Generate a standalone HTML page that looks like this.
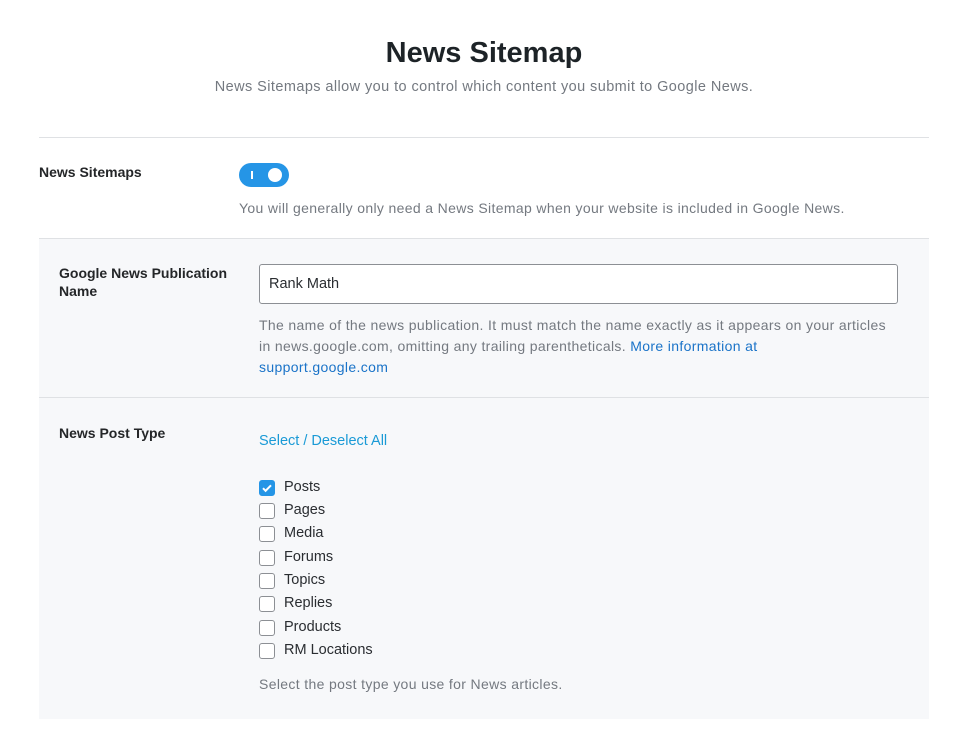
<!DOCTYPE html>
<html><head><meta charset="utf-8"><style>
body{margin:0;background:#fff;font-family:"Liberation Sans",Arial,sans-serif;color:#242628;width:965px;height:737px;position:relative;overflow:hidden}
.a{position:absolute}
h1{position:absolute;top:37px;left:0;width:968px;text-align:center;margin:0;font-size:29px;font-weight:bold;color:#1d2327}
.sub{top:79px;left:0;width:968px;text-align:center;font-size:14.5px;color:#747980;letter-spacing:0.42px}
.line{left:39px;width:890px;height:1px;background:#dfe1e4}
.lbl{font-size:14px;font-weight:bold;color:#242628;line-height:18px}
.desc{font-size:14px;color:#747980;line-height:21px;letter-spacing:0.35px;white-space:nowrap}
a{color:#1a73c8;text-decoration:none}
.cb{position:absolute;left:259px;width:14px;height:14px;border:1px solid #8c8f94;border-radius:3px;background:#fff}
.cbl{position:absolute;left:284px;font-size:14.5px;color:#2a2d31}
</style></head><body>
<h1>News Sitemap</h1>
<div class="a sub">News Sitemaps allow you to control which content you submit to Google News.</div>
<div class="a line" style="top:137px"></div>
<div class="a lbl" style="left:39px;top:163px">News Sitemaps</div>
<div class="a" style="left:239px;top:163px;width:50px;height:24px;border-radius:12px;background:#2595e6">
<div class="a" style="left:12px;top:8px;width:2px;height:8px;background:#fff"></div>
<div class="a" style="left:29px;top:5px;width:14px;height:14px;border-radius:50%;background:#fff"></div></div>
<div class="a desc" style="left:239px;top:198px">You will generally only need a News Sitemap when your website is included in Google News.</div>
<div class="a" style="left:39px;top:238px;width:890px;height:480px;background:#f7f8fa;border-top:1px solid #dfe1e4"></div>
<div class="a lbl" style="left:59px;top:264px">Google News Publication<br>Name</div>
<div class="a" style="left:259px;top:264px;width:637px;height:38px;border:1px solid #8c8f94;border-radius:3px;background:#fff"></div>
<div class="a" style="left:269px;top:276px;font-size:14.5px;color:#2a2d31">Rank Math</div>
<div class="a desc" style="left:259px;top:315px">The name of the news publication. It must match the name exactly as it appears on your articles<br>in news.google.com, omitting any trailing parentheticals. <a>More information at</a><br><a>support.google.com</a></div>
<div class="a line" style="top:397px"></div>
<div class="a lbl" style="left:59px;top:424px">News Post Type</div>
<div class="a" style="left:259px;top:433px;font-size:14.5px;color:#1a9ad6">Select / Deselect All</div>
<div class="cb" style="top:480px;background:#2595e6;border-color:#2595e6"><svg width="14" height="14" viewBox="0 0 14 14" style="position:absolute;left:0;top:0"><path d="M3 7.2l2.6 2.6L11 4.3" stroke="#fff" stroke-width="2" fill="none"/></svg></div>
<div class="cbl" style="top:479px">Posts</div>
<div class="cb" style="top:503px"></div><div class="cbl" style="top:502px">Pages</div>
<div class="cb" style="top:526px"></div><div class="cbl" style="top:525px">Media</div>
<div class="cb" style="top:550px"></div><div class="cbl" style="top:549px">Forums</div>
<div class="cb" style="top:573px"></div><div class="cbl" style="top:572px">Topics</div>
<div class="cb" style="top:596px"></div><div class="cbl" style="top:595px">Replies</div>
<div class="cb" style="top:620px"></div><div class="cbl" style="top:619px">Products</div>
<div class="cb" style="top:643px"></div><div class="cbl" style="top:642px">RM Locations</div>
<div class="a desc" style="left:259px;top:674px">Select the post type you use for News articles.</div>
</body></html>
